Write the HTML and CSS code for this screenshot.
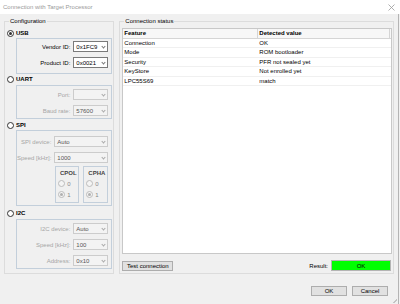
FILE: index.html
```html
<!DOCTYPE html>
<html lang="en">
<head>
<meta charset="UTF-8">
<title>Connection with Target Processor</title>
<link rel="stylesheet" href="styles.css">
</head>
<body>
<div class="window">
  <div class="titlebar">
    <span class="title">Connection with Target Processor</span>
    <svg class="close" width="7" height="7" viewBox="0 0 7 7"><path d="M0.5 0.5L6.5 6.5M6.5 0.5L0.5 6.5" stroke="#9a9a9a" stroke-width="0.8"/></svg>
  </div>
  <div class="client">
    <div class="panels">
      <fieldset class="group config">
        <legend>Configuration</legend>

        <div class="choice"><span class="radio checked"></span><b>USB</b></div>
        <div class="subbox usb">
          <div class="field"><span class="lbl">Vendor ID:</span><span class="combo">0x1FC9<i class="arrow"></i></span></div>
          <div class="field"><span class="lbl">Product ID:</span><span class="combo">0x0021<i class="arrow"></i></span></div>
        </div>

        <div class="choice"><span class="radio"></span><b>UART</b></div>
        <div class="subbox uart off">
          <div class="field"><span class="lbl">Port:</span><span class="combo"><i class="arrow"></i></span></div>
          <div class="field"><span class="lbl">Baud rate:</span><span class="combo">57600<i class="arrow"></i></span></div>
        </div>

        <div class="choice"><span class="radio"></span><b>SPI</b></div>
        <div class="subbox spi off">
          <div class="field"><span class="lbl">SPI device:</span><span class="combo wide">Auto<i class="arrow"></i></span></div>
          <div class="field"><span class="lbl">Speed [kHz]:</span><span class="combo wide">1000<i class="arrow"></i></span></div>
          <div class="modes">
            <div class="mode">
              <div class="mode-title">CPOL</div>
              <div class="opt"><span class="radio"></span>0</div>
              <div class="opt"><span class="radio checked"></span>1</div>
            </div>
            <div class="mode cpha">
              <div class="mode-title">CPHA</div>
              <div class="opt"><span class="radio"></span>0</div>
              <div class="opt"><span class="radio checked"></span>1</div>
            </div>
          </div>
        </div>

        <div class="choice i2c-choice"><span class="radio"></span><b>I2C</b></div>
        <div class="subbox i2c off">
          <div class="field"><span class="lbl">I2C device:</span><span class="combo">Auto<i class="arrow"></i></span></div>
          <div class="field"><span class="lbl">Speed [kHz]:</span><span class="combo">100<i class="arrow"></i></span></div>
          <div class="field"><span class="lbl">Address:</span><span class="combo">0x10<i class="arrow"></i></span></div>
        </div>
      </fieldset>

      <fieldset class="group status">
        <legend>Connection status</legend>
        <div class="table">
          <div class="row head"><span class="c1">Feature</span><span class="c2">Detected value</span></div>
          <div class="row"><span class="c1">Connection</span><span class="c2">OK</span></div>
          <div class="row"><span class="c1">Mode</span><span class="c2">ROM bootloader</span></div>
          <div class="row"><span class="c1">Security</span><span class="c2">PFR not sealed yet</span></div>
          <div class="row"><span class="c1">KeyStore</span><span class="c2">Not enrolled yet</span></div>
          <div class="row"><span class="c1">LPC55S69</span><span class="c2">match</span></div>
        </div>
        <div class="test-bar">
          <span class="btn test">Test connection</span>
          <span class="result-lbl">Result:</span>
          <span class="result">OK</span>
        </div>
      </fieldset>
    </div>

    <div class="footer">
      <span class="btn dlg">OK</span>
      <span class="btn dlg">Cancel</span>
    </div>
    <span class="grip"></span>
  </div>
</div>
</body>
</html>
```

FILE: styles.css
```css
* {
  margin: 0;
  padding: 0;
  box-sizing: border-box;
}
body {
  width: 400px;
  height: 304px;
  overflow: hidden;
  font-family: "Liberation Sans", Arial, sans-serif;
  font-size: 6px;
  color: #000;
  background: #f0f0f0;
  white-space: nowrap;
}
.window {
  width: 400px;
  height: 304px;
}
.titlebar {
  display: flex;
  align-items: center;
  justify-content: space-between;
  height: 14px;
  padding: 0 5px 0 3px;
  background: #fff;
  color: #9a9a9a;
}
.client {
  position: relative;
  height: 290px;
  width: 399px;
  padding: 3px 4px 0 4px;
  border-right: 1px solid #b4b4b4;
}
.panels {
  display: flex;
  gap: 5px;
}

/* group boxes */
.group {
  height: 257px;
  border: 1px solid #dcdcdc;
}
.group legend {
  margin-left: 2px;
  padding: 0 1px;
  line-height: 8px;
}
.config {
  width: 110px;
  padding: 4px 1px 2px 2px;
}
.status {
  width: 278px;
  padding: 3px 1px 2px 2px;
}

/* radio choices */
.choice {
  display: flex;
  align-items: center;
  gap: 2px;
  height: 8px;
}
.radio {
  position: relative;
  display: inline-block;
  flex: none;
  width: 7px;
  height: 7px;
  border: 1px solid #333;
  border-radius: 50%;
  background: #fff;
}
.radio.checked::after {
  content: "";
  position: absolute;
  left: 1px;
  top: 1px;
  width: 3px;
  height: 3px;
  border-radius: 50%;
  background: #333;
}
.subbox {
  display: flex;
  flex-direction: column;
  gap: 5px;
  margin: 1px 0 1px 9px;
  padding: 2px 3px 5px 0;
  border: 1px solid #c3cfdb;
}
.uart {
  margin-top: 2px;
  padding-top: 3px;
  padding-bottom: 2px;
}
.spi {
  margin-top: 1px;
  padding-top: 5px;
  padding-bottom: 2px;
}
.i2c {
  margin-top: 2px;
  padding-top: 3px;
  padding-bottom: 2px;
}
.usb + .choice { margin-top: 1px; }
.uart + .choice { margin-top: 2px; }
.i2c-choice { margin-top: 3px; }

.field {
  display: flex;
  align-items: center;
  justify-content: flex-end;
  gap: 3px;
  height: 11px;
}
.lbl { flex: none; }
.combo {
  position: relative;
  display: flex;
  flex: none;
  align-items: center;
  width: 35px;
  height: 11px;
  padding-left: 2px;
  border: 1px solid #7a7a7a;
  background: #fff;
}
.combo.wide { width: 54px; }
.arrow {
  position: absolute;
  right: 2px;
  top: 3px;
  width: 3px;
  height: 3px;
  border-right: 1px solid #777;
  border-bottom: 1px solid #777;
  transform: rotate(45deg);
}
.off .lbl { color: #a6a6a6; }
.off .combo {
  border-color: #cccccc;
  background: #f3f3f3;
  color: #555;
}
.off .arrow { border-color: #aaa; }

/* SPI modes */
.modes {
  display: flex;
  justify-content: flex-end;
  gap: 4px;
  margin-top: -2px;
}
.mode {
  width: 24px;
  height: 37px;
  padding: 2px 0 0 2px;
  border: 1px solid #c3cfdb;
}
.mode.cpha { width: 25px; }
.mode-title {
  text-align: center;
  font-weight: bold;
  color: #444;
  line-height: 8px;
  margin-bottom: 1px;
}
.opt {
  display: flex;
  align-items: center;
  gap: 2px;
  height: 11px;
  color: #888;
}
.off .radio {
  border-color: #bcbcbc;
  background: #f4f4f4;
}
.off .radio.checked::after { background: #b0b0b0; }

/* status table */
.table {
  height: 226px;
  border: 1px solid #c8c8c8;
  background: #fff;
}
.row {
  display: flex;
  height: 9.4px;
  line-height: 9px;
  border-bottom: 1px solid #f0f0f0;
}
.row .c1 {
  width: 135px;
  padding-left: 1px;
}
.row .c2 { padding-left: 1px; }
.row.head {
  height: 10px;
  font-weight: bold;
  background: #f7f7f7;
  border-bottom: 1px solid #d5d5d5;
}
.row.head .c1 { border-right: 1px solid #d5d5d5; }
.row.head .c2 {
  flex: 1;
  margin-right: 1px;
  border-right: 1px solid #d5d5d5;
}
.test-bar {
  display: flex;
  align-items: center;
  margin-top: 6px;
}
.btn {
  display: flex;
  align-items: center;
  justify-content: center;
  height: 10px;
  border: 1px solid #adadad;
  background: #e1e1e1;
}
.btn.test { width: 51px; }
.result-lbl {
  margin-left: auto;
  margin-right: 3px;
}
.result {
  display: flex;
  align-items: center;
  justify-content: center;
  width: 60px;
  height: 11px;
  margin-right: 1px;
  border: 1px solid #b4b4b4;
  background: #00ff00;
}

/* dialog buttons */
.footer {
  display: flex;
  justify-content: flex-end;
  gap: 5px;
  margin-top: 12px;
  padding-right: 6px;
}
.btn.dlg {
  width: 36px;
  height: 10px;
}
.grip {
  position: absolute;
  right: 1px;
  bottom: 1px;
  width: 5px;
  height: 5px;
  background: linear-gradient(135deg, transparent 55%, #c4c4c4 55%, #c4c4c4 70%, transparent 70%);
}
```
